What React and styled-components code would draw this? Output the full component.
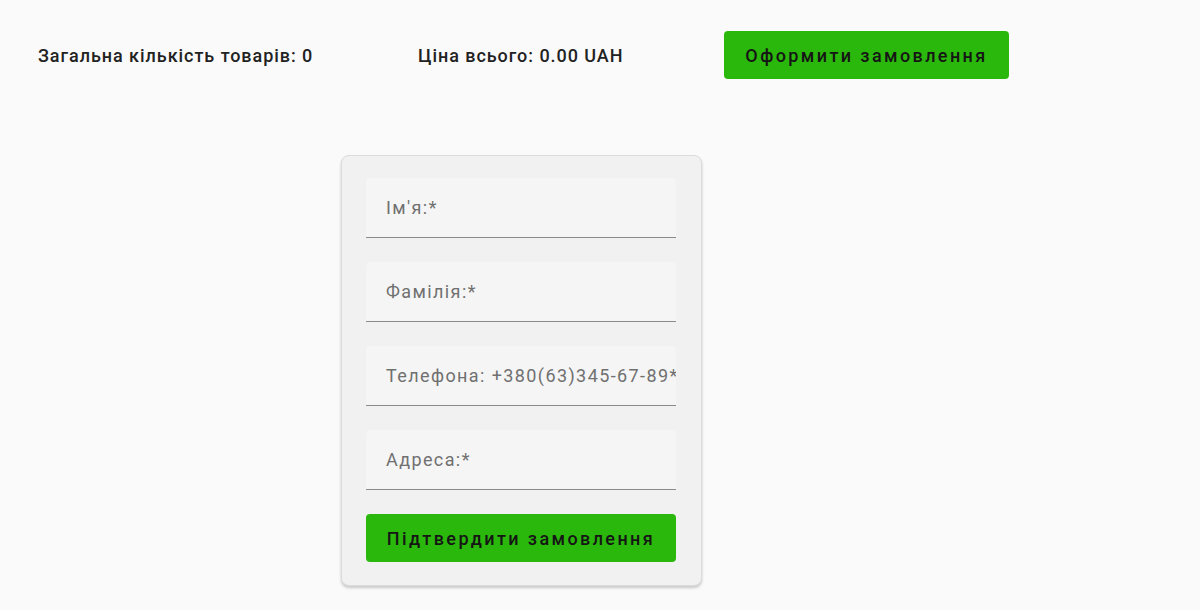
import React from 'react';
import styled, { createGlobalStyle } from 'styled-components';

const GlobalStyle = createGlobalStyle`
    body {
        margin: 0;
        background: #fafafa;
        font-family: Roboto, "Noto Sans", sans-serif;
    }
`;

const Page = styled.div`
    width: 1200px;
    height: 610px;
    overflow: hidden;
`;

const TopBar = styled.div`
    display: flex;
    align-items: center;
    padding: 31px 0 0 38px;
    height: 48px;
`;

const Stat = styled.span`
    font-size: 18px;
    font-weight: 500;
    color: #222;
    letter-spacing: 0.95px;
    width: ${props => props.width}px;
`;

const GreenButton = styled.button`
    font-family: Roboto, sans-serif;
    background: #2bb80c;
    border: none;
    border-radius: 4px;
    color: #151515;
    font-size: 18px;
    font-weight: 500;
    letter-spacing: 2.4px;
    height: 48px;
    width: ${props => props.width}px;
    padding: 0;
    cursor: pointer;
`;

const CardRow = styled.div`
    padding: 76px 0 0 341px;
`;

const Card = styled.form`
    width: 361px;
    box-sizing: border-box;
    background: #f1f1f1;
    border: 1px solid #dcdcdc;
    border-radius: 8px;
    box-shadow: 0 2px 3px rgba(0, 0, 0, 0.2);
    padding: 22px 25px 23px 24px;
    display: flex;
    flex-direction: column;
    gap: 24px;
`;

const Field = styled.div`
    height: 60px;
    box-sizing: border-box;
    background: #f5f5f5;
    border-radius: 4px 4px 0 0;
    border-bottom: 1px solid #8a8a8a;
    display: flex;
    align-items: center;
    padding-left: 20px;
    overflow: hidden;
    white-space: nowrap;
`;

const Label = styled.span`
    font-size: 18px;
    color: #707070;
    letter-spacing: 1.4px;
`;

const fields = [
    "Ім'я:*",
    'Фамілія:*',
    'Телефона: +380(63)345-67-89*',
    'Адреса:*',
];

export default function App() {
    return (
        <Page>
            <GlobalStyle />
            <TopBar>
                <Stat width={380}>Загальна кількість товарів: 0</Stat>
                <Stat width={306}>Ціна всього: 0.00 UAH</Stat>
                <GreenButton width={285}>Оформити замовлення</GreenButton>
            </TopBar>
            <CardRow>
                <Card>
                    {fields.map(f => (
                        <Field key={f}>
                            <Label>{f}</Label>
                        </Field>
                    ))}
                    <GreenButton type="button" width={310}>
                        Підтвердити замовлення
                    </GreenButton>
                </Card>
            </CardRow>
        </Page>
    );
}
